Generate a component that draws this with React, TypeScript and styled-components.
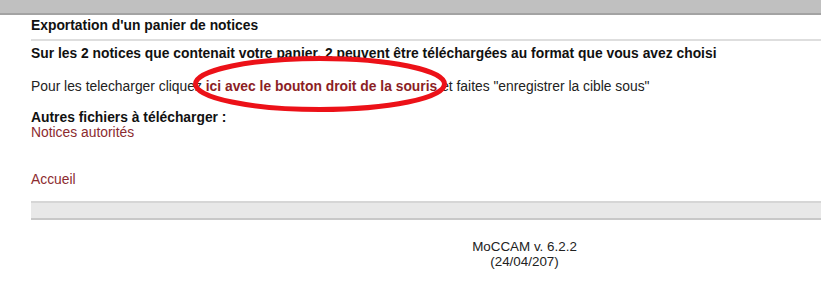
import styled, { createGlobalStyle } from 'styled-components'

const GlobalStyle = createGlobalStyle`
  html, body {
    margin: 0;
    padding: 0;
    background: #ffffff;
  }
  body {
    font-family: "Liberation Sans", Arial, sans-serif;
    font-size: 13.85px;
    color: #111111;
  }
`

function App() {
  return (
    <Page>
      <GlobalStyle />
      <TopBar />
      <Content>
        <Title>Exportation d'un panier de notices</Title>
        <Summary>
          Sur les 2 notices que contenait votre panier, 2 peuvent être téléchargées au format que vous avez choisi
        </Summary>
        <Instructions>
          Pour les telecharger cliquez{' '}
          <Circled>
            <DownloadLink href="#">ici avec le bouton droit de la souris</DownloadLink>
            <Ellipse viewBox="0 0 254 56" aria-hidden="true">
              <ellipse cx="127" cy="28" rx="124.5" ry="25.5" fill="none" stroke="#ec1118" strokeWidth="5" />
            </Ellipse>
          </Circled>{' '}
          et faites "enregistrer la cible sous"
        </Instructions>
        <OtherFiles>
          <SectionLabel>Autres fichiers à télécharger :</SectionLabel>
          <PlainLink href="#">Notices autorités</PlainLink>
        </OtherFiles>
        <HomeLink href="#">Accueil</HomeLink>
        <FooterBar />
      </Content>
      <Footer>
        <span>MoCCAM v. 6.2.2</span>
        <span>(24/04/207)</span>
      </Footer>
    </Page>
  )
}

export default App

const Page = styled.div`
  width: 821px;
  height: 291px;
  overflow: hidden;
`

const TopBar = styled.div`
  height: 13px;
  background: #c0c0c0;
  border-bottom: 2px solid #a3a3a3;
`

const Content = styled.div`
  padding-left: 31px;
  display: flex;
  flex-direction: column;
`

const Title = styled.div`
  font-weight: bold;
  line-height: 16px;
  padding: 2px 0 6px;
  border-bottom: 2px solid #dedede;
`

const Summary = styled.div`
  font-weight: bold;
  line-height: 16px;
  margin-top: 4px;
`

const Instructions = styled.div`
  line-height: 16px;
  margin-top: 17px;
  color: #222222;
`

const Circled = styled.span`
  position: relative;
  display: inline-block;
`

const DownloadLink = styled.a`
  font-weight: bold;
  color: #8b1e25;
  text-decoration: none;
`

const Ellipse = styled.svg`
  position: absolute;
  left: -13px;
  top: -22px;
  width: 254px;
  height: 56px;
  overflow: visible;
  pointer-events: none;
`

const OtherFiles = styled.div`
  display: flex;
  flex-direction: column;
  line-height: 15px;
  margin-top: 16px;
`

const SectionLabel = styled.span`
  font-weight: bold;
`

const PlainLink = styled.a`
  color: #8c2b2f;
  text-decoration: none;
`

const HomeLink = styled(PlainLink)`
  line-height: 16px;
  margin-top: 31px;
  align-self: flex-start;
`

const FooterBar = styled.div`
  height: 15px;
  margin-top: 14px;
  background: #e8e8e8;
  border-top: 2px solid #d6d6d6;
  border-bottom: 2px solid #c8c8c8;
`

const Footer = styled.div`
  display: flex;
  flex-direction: column;
  align-items: center;
  padding-left: 228px;
  margin-top: 19px;
  line-height: 15px;
  font-size: 13.4px;
  color: #222222;
`
